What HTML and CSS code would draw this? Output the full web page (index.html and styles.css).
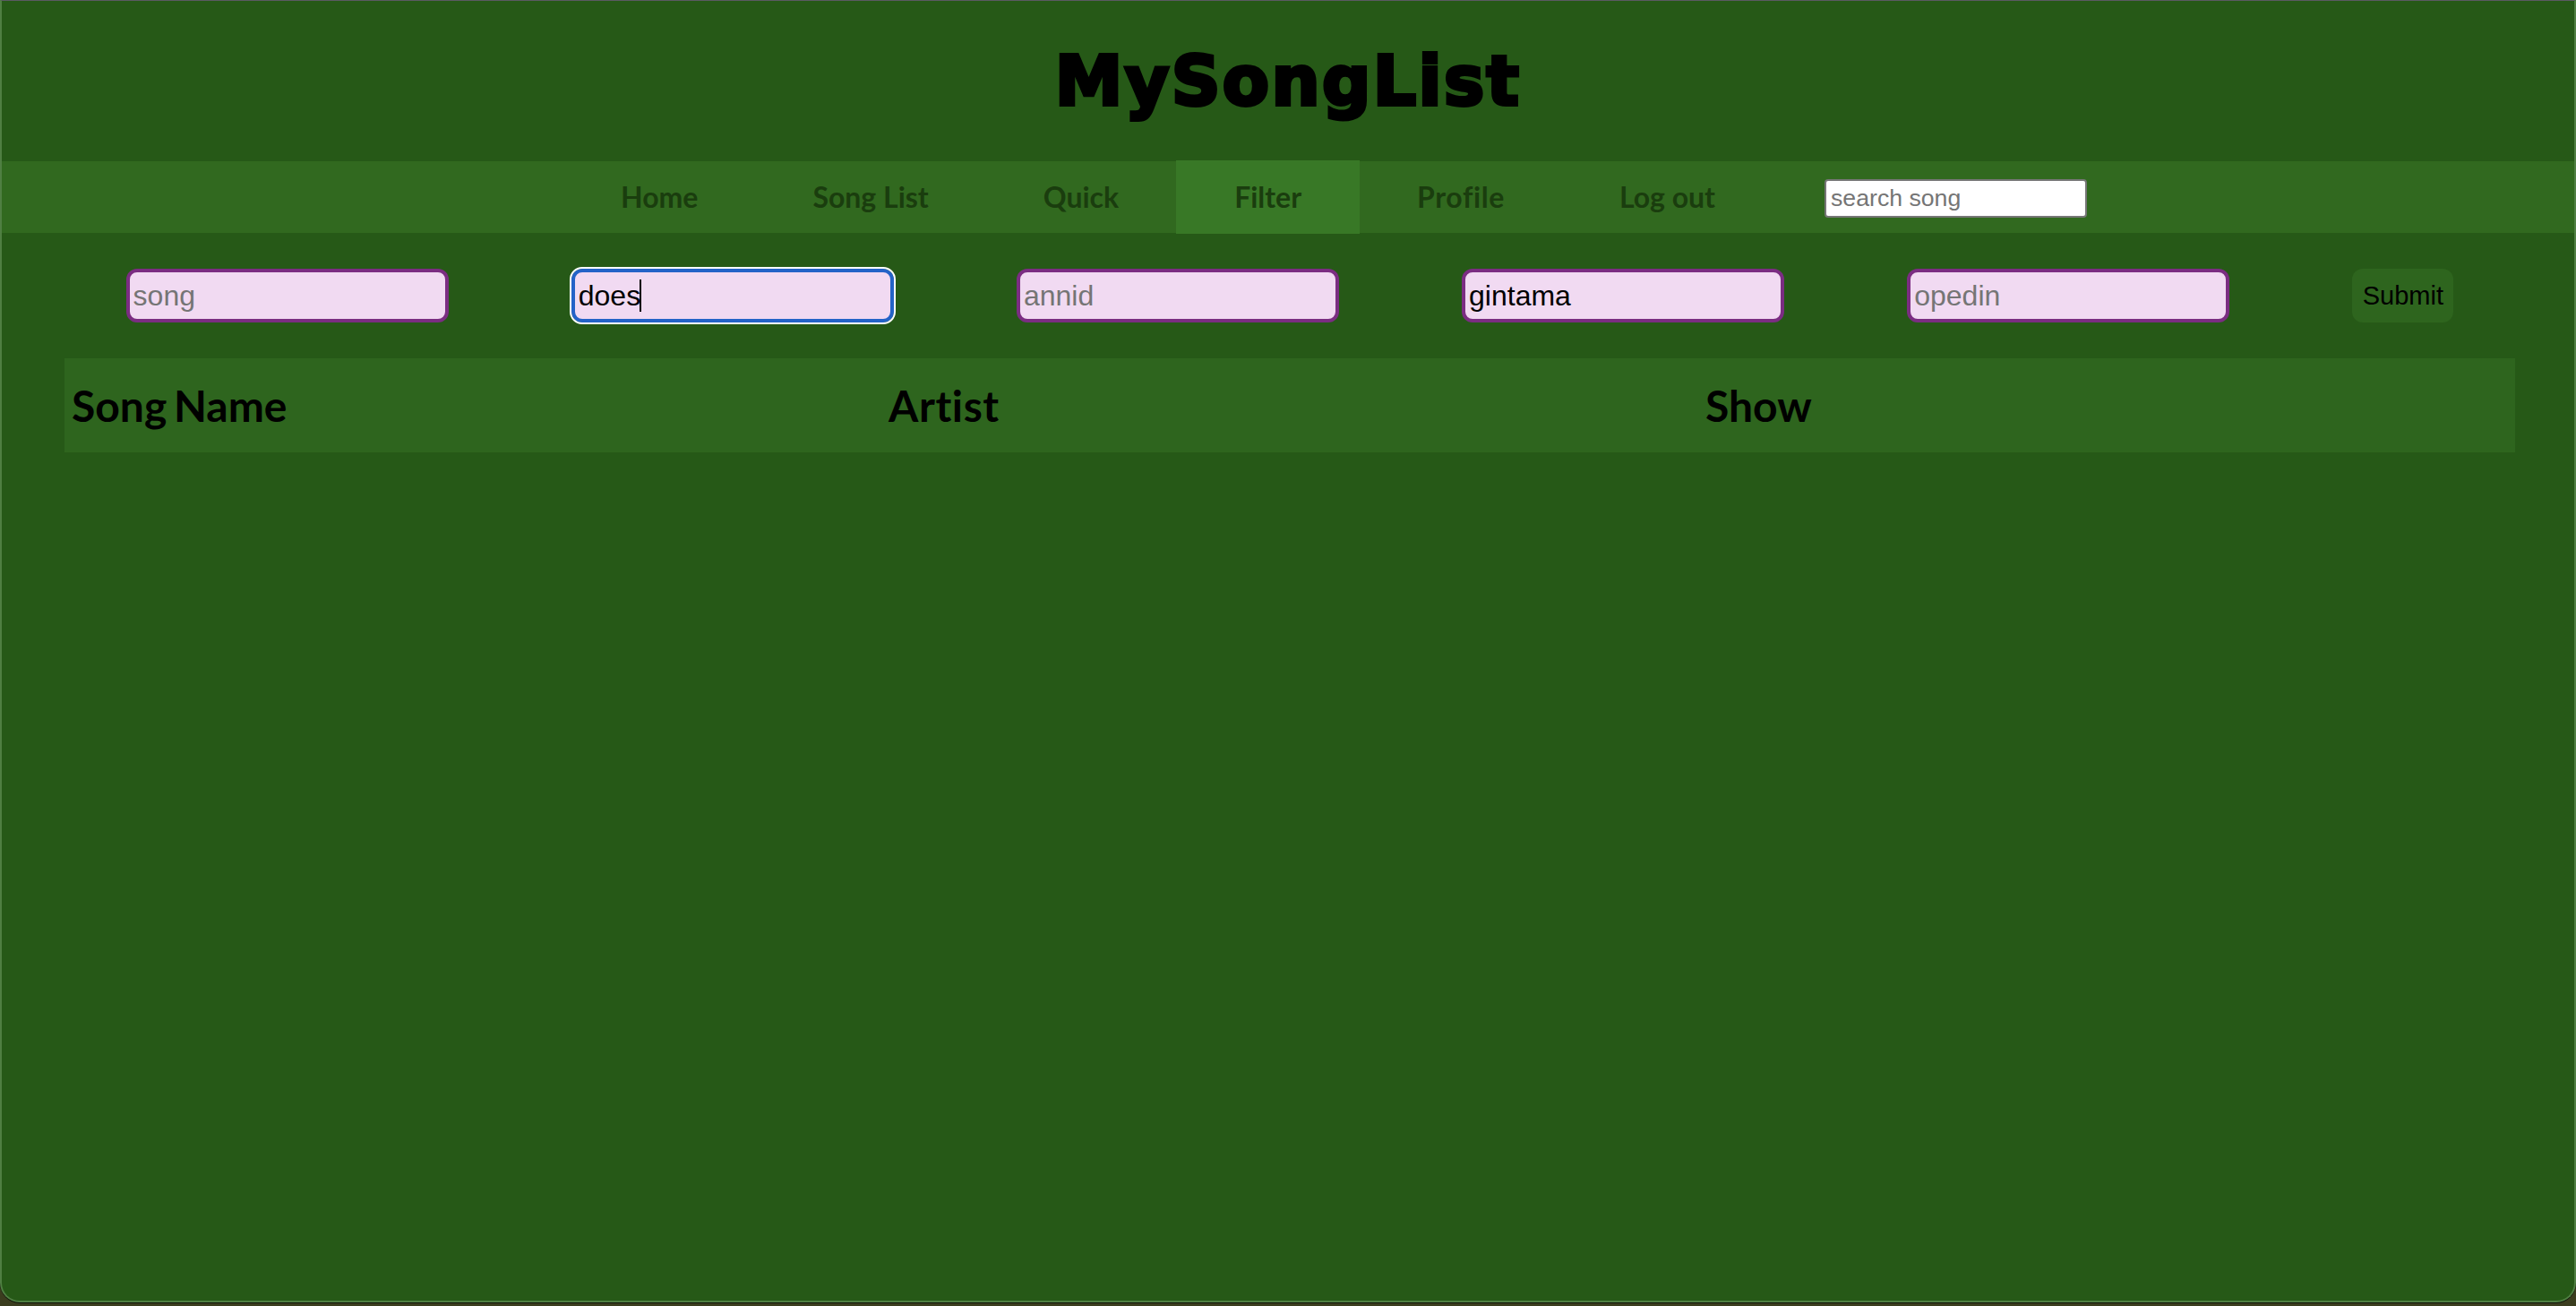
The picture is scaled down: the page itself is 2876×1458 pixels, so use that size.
FILE: index.html
```html
<!DOCTYPE html>
<html lang="en">
<head>
    <meta charset="UTF-8">
    <title>MySongList</title>
    <link rel="stylesheet" href="styles.css">
</head>
<body>
    <div class="window">
        <header class="title-bar">
            <h1 class="title">MySongList</h1>
        </header>
        <nav class="nav">
            <a class="nav-link" href="#">Home</a>
            <a class="nav-link" href="#">Song List</a>
            <a class="nav-link" href="#">Quick</a>
            <a class="nav-link active" href="#">Filter</a>
            <a class="nav-link spaced" href="#">Profile</a>
            <a class="nav-link" href="#">Log out</a>
            <input class="nav-search" type="text" placeholder="search song">
        </nav>
        <main class="content">
            <form class="filters">
                <input class="filter-input" type="text" placeholder="song">
                <span class="filter-field">
                    <input class="filter-input" type="text" placeholder="artist" value="does" autofocus>
                    <span class="caret"></span>
                </span>
                <input class="filter-input" type="text" placeholder="annid">
                <input class="filter-input" type="text" placeholder="show" value="gintama">
                <input class="filter-input" type="text" placeholder="opedin">
                <button class="submit" type="button">Submit</button>
            </form>
            <table class="songs">
                <thead>
                    <tr>
                        <th>Song Name</th>
                        <th class="spaced">Artist</th>
                        <th>Show</th>
                    </tr>
                </thead>
            </table>
        </main>
    </div>
</body>
</html>
```

FILE: styles.css
```css
html, body {
    margin: 0;
    height: 100%;
}
body {
    background-color: #3b3d1f;
    overflow: hidden;
}
.window {
    box-sizing: border-box;
    height: 1454px;
    background-color: #265917;
    border: 2px solid #4f7f42;
    border-top: 1px solid #5b5a63;
    border-radius: 0 0 22px 22px;
    box-shadow: 0 1px 0 #10140a;
}
.title-bar {
    height: 179px;
    display: flex;
    justify-content: center;
}
.title {
    margin: 43px 0 0;
    font-family: "DejaVu Sans", sans-serif;
    font-size: 76px;
    font-weight: bold;
    letter-spacing: 2.4px;
    line-height: 94px;
    color: #000;
    -webkit-text-stroke: 4px #000;
}
.nav {
    display: flex;
    align-items: center;
    height: 80px;
    padding-left: 627px;
    background-color: #31691f;
}
.nav-link {
    height: 82px;
    line-height: 82px;
    padding: 0 64px;
    font-family: Lato, sans-serif;
    font-size: 32px;
    font-weight: bold;
    font-variant-ligatures: none;
    color: #1a3d0e;
    text-decoration: none;
}
.nav-link.active {
    padding: 0 65px;
    background-color: #387826;
}
.nav-link.spaced {
    letter-spacing: 0.6px;
}
.nav-search {
    box-sizing: border-box;
    width: 293px;
    height: 43px;
    margin: 2px 0 0 58px;
    padding: 2px 5px;
    border: 2px solid #767676;
    border-radius: 4px;
    background-color: #fff;
    font-family: "Liberation Sans", Arial, sans-serif;
    font-size: 26.67px;
}
.content {
    padding: 40px 66px 0 70px;
}
.filters {
    display: flex;
    justify-content: space-around;
    margin-bottom: 40px;
}
.filter-field {
    position: relative;
    display: block;
}
.filter-input {
    display: block;
    box-sizing: border-box;
    width: 360px;
    height: 60px;
    padding: 2px 4px;
    border: 4px solid #7b2d82;
    border-radius: 12px;
    background-color: #f1daf2;
    font-family: "Liberation Sans", Arial, sans-serif;
    font-size: 32px;
    color: #000;
}
.filter-input:focus {
    outline: 2px solid #fff;
    outline-offset: 0;
    border-color: #2463c8;
    caret-color: transparent;
}
.caret {
    position: absolute;
    left: 76px;
    top: 12px;
    width: 2px;
    height: 36px;
    background-color: #000;
}
.submit {
    box-sizing: border-box;
    width: 113px;
    height: 60px;
    padding: 0;
    border: none;
    border-radius: 12px;
    background-color: #2e651e;
    font-family: "Liberation Sans", Arial, sans-serif;
    font-size: 29px;
    color: #000;
}
.songs {
    width: 100%;
    table-layout: fixed;
    border-collapse: collapse;
    background-color: #2e651e;
}
.songs th {
    height: 105px;
    padding: 0 8px;
    text-align: left;
    font-family: Lato, sans-serif;
    font-size: 48px;
    font-weight: bold;
    font-variant-ligatures: none;
    word-spacing: -4px;
    color: #000;
}
.songs th.spaced {
    letter-spacing: 0.6px;
}
```
